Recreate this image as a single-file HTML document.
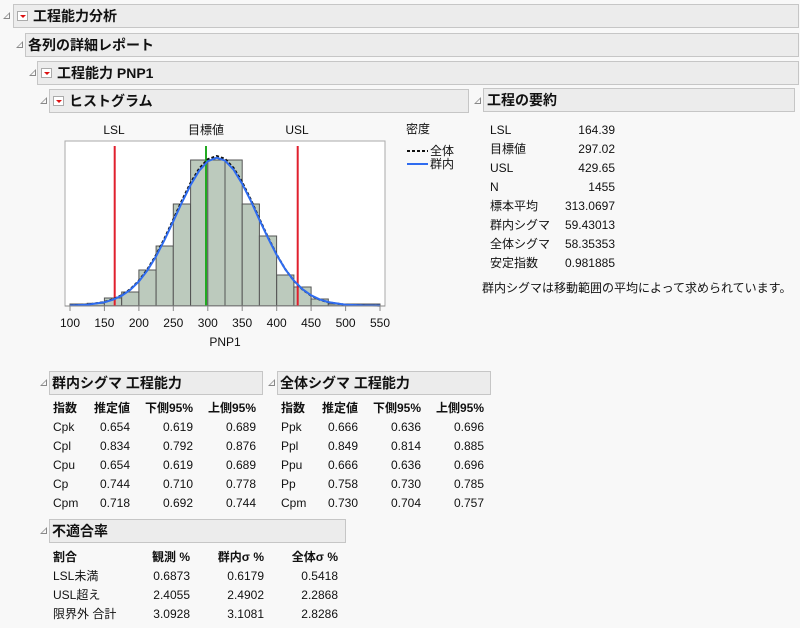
<!DOCTYPE html>
<html><head><meta charset="utf-8"><style>
body{margin:0;width:800px;height:628px;background:#f8f8f8;font-family:"Liberation Sans","Noto Sans CJK JP",sans-serif;font-size:12px;color:#111;position:relative;overflow:hidden}
.a{position:absolute;white-space:nowrap}
.hb{position:absolute;background:#ececec;border:1px solid #c6c6c6;height:22px;box-sizing:border-box}
.ht{position:absolute;font-weight:bold;font-size:14px;line-height:16px;white-space:nowrap}
.tri{position:absolute;width:0;height:0;border-left:7px solid transparent;border-bottom:7px solid #888}
.tri::after{content:"";position:absolute;left:-5px;top:2px;border-left:4px solid transparent;border-bottom:4px solid #f8f8f8}
.rb{position:absolute;width:11px;height:10px;border:1px solid #aaa;background:#fff;box-sizing:border-box}
.rb::after{content:"";position:absolute;left:2px;top:3px;border-left:3px solid transparent;border-right:3px solid transparent;border-top:3px solid #d11}
.r{text-align:right}
.b{font-weight:bold}
</style></head><body>

<div class="tri" style="left:3px;top:12px"></div>
<div class="hb" style="left:13px;top:4px;width:786px;height:24px"></div>
<div class="rb" style="left:17px;top:11px"></div>
<div class="ht" style="left:33px;top:8px">工程能力分析</div>

<div class="tri" style="left:16px;top:41px"></div>
<div class="hb" style="left:25px;top:33px;width:774px;height:24px"></div>
<div class="ht" style="left:28px;top:37px">各列の詳細レポート</div>

<div class="tri" style="left:29px;top:69px"></div>
<div class="hb" style="left:37px;top:61px;width:762px;height:24px"></div>
<div class="rb" style="left:41px;top:68px"></div>
<div class="ht" style="left:57px;top:65px">工程能力 PNP1</div>

<div class="tri" style="left:40px;top:97px"></div>
<div class="hb" style="left:49px;top:89px;width:420px;height:24px"></div>
<div class="rb" style="left:53px;top:96px"></div>
<div class="ht" style="left:69px;top:93px">ヒストグラム</div>

<div class="tri" style="left:474px;top:97px"></div>
<div class="hb" style="left:483px;top:88px;width:312px;height:24px"></div>
<div class="ht" style="left:487px;top:92px">工程の要約</div>

<svg class="a" style="left:0;top:0" width="800" height="628">
<rect x="65" y="141" width="320" height="165" fill="#fff" stroke="#aaa"/>
<g fill="#bccabd" stroke="#555" stroke-width="1">
<rect x="70" y="304" width="17.2" height="1.7"/><rect x="87.2" y="303.3" width="17.2" height="2.4"/><rect x="104.4" y="298" width="17.2" height="7.7"/><rect x="121.7" y="292" width="17.2" height="13.7"/><rect x="138.9" y="270" width="17.2" height="35.7"/><rect x="156.1" y="246" width="17.2" height="59.7"/><rect x="173.3" y="204" width="17.2" height="101.7"/><rect x="190.6" y="160" width="17.2" height="145.7"/><rect x="207.8" y="160" width="17.2" height="145.7"/><rect x="225" y="160" width="17.2" height="145.7"/><rect x="242.2" y="204" width="17.2" height="101.7"/><rect x="259.4" y="236" width="17.2" height="69.7"/><rect x="276.7" y="275" width="17.2" height="30.7"/><rect x="293.9" y="287" width="17.2" height="18.7"/><rect x="311.1" y="299" width="17.2" height="6.7"/><rect x="328.3" y="304" width="17.2" height="1.7"/><rect x="345.6" y="304" width="17.2" height="1.7"/><rect x="362.8" y="304" width="17.2" height="1.7"/>
</g>
<line x1="114.7" y1="146" x2="114.7" y2="306" stroke="#e0202e" stroke-width="2"/>
<line x1="297.7" y1="146" x2="297.7" y2="306" stroke="#e0202e" stroke-width="2"/>
<line x1="206" y1="146" x2="206" y2="306" stroke="#22aa22" stroke-width="2"/>
<polyline fill="none" stroke="#111" stroke-width="2" stroke-dasharray="3,2" points="70,305.5 87.2,304.6 104.4,302 113,299.3 121.7,295.2 130.3,289.2 138.9,280.6 147.5,269.2 156.1,255 164.7,238 173.3,219.5 181.9,200.5 190.6,182.8 199.2,168.5 207.8,159.2 216.7,156 225,158.8 233.6,168 242.2,182.2 250.9,199.8 259.4,218.8 268.1,237.5 276.7,254.6 285.3,269.2 293.9,280.8 302.5,289.5 311.1,295.6 319.7,299.7 328.3,302.3 345.6,304.8 362.8,305.4 380,305.6"/>
<polyline fill="none" stroke="#2f6cf0" stroke-width="2" points="70,305.5 87.2,304.7 104.4,302.3 113,299.7 121.7,295.7 130.3,289.8 138.9,281.4 147.5,270.3 156.1,256.3 164.7,239.6 173.3,221.3 181.9,202.5 190.6,185 199.2,170.7 207.8,161.2 216.7,157.7 225,160.6 233.6,169.7 242.2,183.8 250.9,201.1 259.4,219.8 268.1,238.2 276.7,255 285.3,269.3 293.9,280.7 302.5,289.2 311.1,295.3 319.7,299.4 328.3,302.1 345.6,304.7 362.8,305.4 380,305.6"/>
<g stroke="#888"><line x1="65" y1="306" x2="385" y2="306"/>
<line x1="70" y1="306" x2="70" y2="311"/><line x1="104.4" y1="306" x2="104.4" y2="311"/><line x1="138.9" y1="306" x2="138.9" y2="311"/><line x1="173.3" y1="306" x2="173.3" y2="311"/><line x1="207.8" y1="306" x2="207.8" y2="311"/><line x1="242.2" y1="306" x2="242.2" y2="311"/><line x1="276.7" y1="306" x2="276.7" y2="311"/><line x1="311.1" y1="306" x2="311.1" y2="311"/><line x1="345.6" y1="306" x2="345.6" y2="311"/><line x1="380" y1="306" x2="380" y2="311"/>
</g>
<g font-family="Liberation Sans,Noto Sans CJK JP,sans-serif" font-size="12" fill="#111" text-anchor="middle">
<text x="114" y="134">LSL</text><text x="206" y="134">目標値</text><text x="297" y="134">USL</text>
<text x="70" y="327">100</text><text x="104.4" y="327">150</text><text x="138.9" y="327">200</text><text x="173.3" y="327">250</text><text x="207.8" y="327">300</text><text x="242.2" y="327">350</text><text x="276.7" y="327">400</text><text x="311.1" y="327">450</text><text x="345.6" y="327">500</text><text x="380" y="327">550</text>
<text x="225" y="346">PNP1</text>
<text x="418" y="133">密度</text>
</g>
<line x1="407" y1="151" x2="428" y2="151" stroke="#111" stroke-width="2" stroke-dasharray="3,2"/>
<line x1="407" y1="164" x2="428" y2="164" stroke="#2f6cf0" stroke-width="2"/>
<g font-family="Liberation Sans,Noto Sans CJK JP,sans-serif" font-size="12" fill="#111"><text x="430" y="155">全体</text><text x="430" y="168">群内</text></g>
</svg>

<!-- summary -->
<div class="a" style="left:490px;top:121px;line-height:19px">LSL<br>目標値<br>USL<br>N<br>標本平均<br>群内シグマ<br>全体シグマ<br>安定指数</div>
<div class="a r" style="left:545px;top:121px;width:70px;line-height:19px">164.39<br>297.02<br>429.65<br>1455<br>313.0697<br>59.43013<br>58.35353<br>0.981885</div>
<div class="a" style="left:482px;top:279px">群内シグマは移動範囲の平均によって求められています。</div>

<!-- within -->
<div class="tri" style="left:40px;top:379px"></div>
<div class="hb" style="left:49px;top:371px;width:214px;height:24px"></div>
<div class="ht" style="left:52px;top:375px">群内シグマ 工程能力</div>
<div class="tri" style="left:268px;top:379px"></div>
<div class="hb" style="left:277px;top:371px;width:214px;height:24px"></div>
<div class="ht" style="left:280px;top:375px">全体シグマ 工程能力</div>

<div class="a" style="left:53px;top:399px;line-height:19px"><span class="b">指数</span><br>Cpk<br>Cpl<br>Cpu<br>Cp<br>Cpm</div>
<div class="a r" style="left:80px;top:399px;width:50px;line-height:19px"><span class="b">推定値</span><br>0.654<br>0.834<br>0.654<br>0.744<br>0.718</div>
<div class="a r" style="left:133px;top:399px;width:60px;line-height:19px"><span class="b">下側95%</span><br>0.619<br>0.792<br>0.619<br>0.710<br>0.692</div>
<div class="a r" style="left:196px;top:399px;width:60px;line-height:19px"><span class="b">上側95%</span><br>0.689<br>0.876<br>0.689<br>0.778<br>0.744</div>

<div class="a" style="left:281px;top:399px;line-height:19px"><span class="b">指数</span><br>Ppk<br>Ppl<br>Ppu<br>Pp<br>Cpm</div>
<div class="a r" style="left:308px;top:399px;width:50px;line-height:19px"><span class="b">推定値</span><br>0.666<br>0.849<br>0.666<br>0.758<br>0.730</div>
<div class="a r" style="left:361px;top:399px;width:60px;line-height:19px"><span class="b">下側95%</span><br>0.636<br>0.814<br>0.636<br>0.730<br>0.704</div>
<div class="a r" style="left:424px;top:399px;width:60px;line-height:19px"><span class="b">上側95%</span><br>0.696<br>0.885<br>0.696<br>0.785<br>0.757</div>

<!-- nonconformance -->
<div class="tri" style="left:40px;top:527px"></div>
<div class="hb" style="left:49px;top:519px;width:297px;height:24px"></div>
<div class="ht" style="left:52px;top:523px">不適合率</div>
<div class="a" style="left:53px;top:548px;line-height:19px"><span class="b">割合</span><br>LSL未満<br>USL超え<br>限界外 合計</div>
<div class="a r" style="left:120px;top:548px;width:70px;line-height:19px"><span class="b">観測 %</span><br>0.6873<br>2.4055<br>3.0928</div>
<div class="a r" style="left:194px;top:548px;width:70px;line-height:19px"><span class="b">群内σ %</span><br>0.6179<br>2.4902<br>3.1081</div>
<div class="a r" style="left:268px;top:548px;width:70px;line-height:19px"><span class="b">全体σ %</span><br>0.5418<br>2.2868<br>2.8286</div>
</body></html>
